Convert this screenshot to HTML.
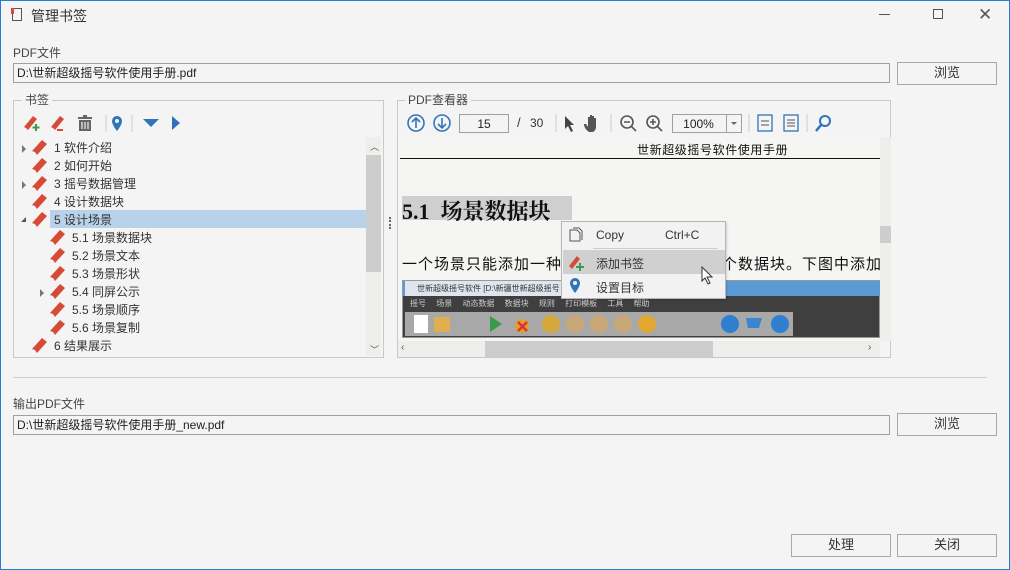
<!DOCTYPE html>
<html><head><meta charset="utf-8"><style>
*{margin:0;padding:0;box-sizing:border-box}
body{width:1010px;height:570px;background:#f4f4f4;font-family:"Liberation Sans","Microsoft YaHei","Noto Sans CJK SC",sans-serif;font-size:12px;color:#333;position:relative;overflow:hidden}
.a{position:absolute}
.win{position:absolute;left:0;top:0;width:1010px;height:570px;border:1px solid #2a7ad2}
.inp{position:absolute;background:#f4f4f4;border:1px solid #a0a0a0;padding:2px 3px;font-size:12px;line-height:14px;color:#222}
.btn{position:absolute;border:1px solid #a8a8a8;background:#f4f4f4;text-align:center;font-size:13px;line-height:20px;color:#333}
.grp{position:absolute;border:1px solid #c8c8c8}
.lg{position:absolute;background:#f4f4f4;padding:0 3px;font-size:12px;color:#444;line-height:13px}
.row{position:absolute;font-size:12px;line-height:16px;color:#333;white-space:nowrap}
.bm{position:absolute;width:16px;height:16px}
.arr{position:absolute;width:0;height:0;border-top:4px solid transparent;border-bottom:4px solid transparent;border-left:4px solid #777}
</style></head><body>
<div class="win"></div>
<div class="a" style="left:12px;top:8px;width:10px;height:13px;border:1px solid #555"></div>
<div class="a" style="left:11px;top:8px;width:3px;height:6px;background:#d64b35"></div>
<div class="a" style="left:31px;top:6px;font-size:14px;color:#333">管理书签</div>
<div class="a" style="left:879px;top:14px;width:11px;height:1px;background:#555"></div>
<div class="a" style="left:933px;top:9px;width:10px;height:10px;border:1px solid #555"></div>
<div class="a" style="left:978px;top:5px;font-size:17px;color:#555">✕</div>

<div class="a" style="left:13px;top:44px;color:#444">PDF文件</div>
<div class="inp" style="left:13px;top:63px;width:877px;height:20px">D:\世新超级摇号软件使用手册.pdf</div>
<div class="btn" style="left:897px;top:62px;width:100px;height:23px">浏览</div>

<div class="grp" style="left:13px;top:100px;width:371px;height:258px"></div>
<div class="lg" style="left:22px;top:94px">书签</div>
<svg class="a" style="left:22px;top:113px" width="170" height="20">
<g fill="#d64b35"><path d="M2 14 L11 3 L15 6 L6 17 L4 15 Z"/><path d="M29 14 L38 3 L42 6 L33 17 L31 15 Z"/></g>
<path d="M14 11v7M10.5 14.5h7" stroke="#3d9a4c" stroke-width="2"/>
<path d="M35 17h6" stroke="#d64b35" stroke-width="2"/>
<g fill="#666"><rect x="56" y="4" width="14" height="2"/><rect x="61" y="2" width="4" height="2"/><rect x="57" y="7" width="12" height="11"/></g>
<g stroke="#f4f4f4" stroke-width="1.2"><path d="M60 9v7M63 9v7M66 9v7"/></g>
<line x1="84" y1="2" x2="84" y2="19" stroke="#ccc"/>
<path d="M95 3a5 5 0 0 1 5 5c0 4-5 10-5 10s-5-6-5-10a5 5 0 0 1 5-5z" fill="#2f74b8"/><circle cx="95" cy="8" r="2" fill="#f4f4f4"/>
<line x1="110" y1="2" x2="110" y2="19" stroke="#ccc"/>
<path d="M121 6h16l-8 8z" fill="#2f74b8"/>
<path d="M150 3l8 7-8 7z" fill="#2f74b8"/>
</svg>
<div class="a" style="left:50px;top:210px;width:316px;height:18px;background:#b8d2ea"></div>
<div id="tree"></div>
<script>
var rows=[[0,1,"1 软件介绍"],[0,0,"2 如何开始"],[0,1,"3 摇号数据管理"],[0,0,"4 设计数据块"],[0,2,"5 设计场景"],[1,0,"5.1 场景数据块"],[1,0,"5.2 场景文本"],[1,0,"5.3 场景形状"],[1,1,"5.4 同屏公示"],[1,0,"5.5 场景顺序"],[1,0,"5.6 场景复制"],[0,0,"6 结果展示"]];
var h="";rows.forEach(function(r,i){var y=139+i*18,x=r[0]?50:32;
if(r[1]==1)h+='<div class="arr" style="left:'+(x-10)+'px;top:'+(y+6)+'px"></div>';
if(r[1]==2)h+='<div class="a" style="left:'+(x-11)+'px;top:'+(y+6)+'px;width:0;height:0;border-left:5px solid transparent;border-bottom:5px solid #555"></div>';
h+='<svg class="bm" style="left:'+x+'px;top:'+y+'px" viewBox="0 0 16 16"><path d="M0 12 L10 1 L15 5 L5 16 L3 13 Z" fill="#d64b35"/></svg>';
h+='<div class="row" style="left:'+(x+22)+'px;top:'+(y+1)+'px">'+r[2]+'</div>';});
document.getElementById("tree").innerHTML=h;
</script>
<div class="a" style="left:366px;top:137px;width:15px;height:219px;background:#eeeeea"></div>
<div class="a" style="left:366px;top:155px;width:15px;height:117px;background:#cdcdcd"></div>
<div class="a" style="left:370px;top:140px;font-size:9px;color:#555">︿</div>
<div class="a" style="left:370px;top:343px;font-size:9px;color:#555">﹀</div>
<div class="a" style="left:389px;top:217px;width:2px;height:12px;border-left:2px dotted #666"></div>

<div class="grp" style="left:397px;top:100px;width:494px;height:258px"></div>
<div class="lg" style="left:405px;top:94px">PDF查看器</div>
<svg class="a" style="left:405px;top:112px" width="430" height="22">
<g fill="none" stroke="#2f74b8" stroke-width="1.6"><circle cx="11" cy="11" r="8"/><path d="M11 16V6M7 10l4-4 4 4"/><circle cx="37" cy="11" r="8"/><path d="M37 6v10M33 12l4 4 4-4"/></g>
<line x1="151" y1="2" x2="151" y2="20" stroke="#ccc"/>
<path d="M160 4v13l3-3 3 6 2-1-3-6h4z" fill="#444"/>
<path d="M184 20c-3-2-5-5-5-8l2 0 2 3V5h2v6V3h2v8V4h2v7V6h2v9c0 3-2 5-4 5z" fill="#555"/>
<line x1="206" y1="2" x2="206" y2="20" stroke="#ccc"/>
<g fill="none" stroke="#555" stroke-width="1.6"><circle cx="222" cy="10" r="6"/><path d="M226 14l5 5M219 10h6"/><circle cx="248" cy="10" r="6"/><path d="M252 14l5 5M245 10h6M248 7v6"/></g>
<line x1="344" y1="2" x2="344" y2="20" stroke="#ccc"/>
<rect x="353" y="3" width="14" height="16" fill="none" stroke="#2f74b8" stroke-width="1.3"/><path d="M356 13h8M356 9h8" stroke="#555"/>
<rect x="379" y="3" width="14" height="16" fill="none" stroke="#2f74b8" stroke-width="1.3"/><path d="M382 8h8M382 11h8M382 14h8" stroke="#555"/>
<line x1="402" y1="2" x2="402" y2="20" stroke="#ccc"/>
<circle cx="420" cy="9" r="5" fill="none" stroke="#2f74b8" stroke-width="2"/><path d="M416 13l-5 6" stroke="#2f74b8" stroke-width="2.5"/>
</svg>
<div class="inp" style="left:459px;top:114px;width:50px;height:19px;text-align:center">15</div>
<div class="a" style="left:517px;top:115px;font-size:13px">/</div>
<div class="a" style="left:530px;top:116px;font-size:12px">30</div>
<div class="inp" style="left:672px;top:114px;width:70px;height:19px;text-align:center;padding-right:20px">100%</div>
<div class="a" style="left:726px;top:114px;width:16px;height:19px;border-left:1px solid #a0a0a0"></div>
<div class="a" style="left:731px;top:122px;border-left:3px solid transparent;border-right:3px solid transparent;border-top:3px solid #666"></div>

<div class="a" style="left:398px;top:137px;width:482px;height:204px;background:#f5f5f3"></div>
<div class="a" style="left:637px;top:141px;font-size:12px;color:#111;letter-spacing:0.6px">世新超级摇号软件使用手册</div>
<div class="a" style="left:400px;top:158px;width:480px;height:1px;background:#111"></div>
<div class="a" style="left:402px;top:196px;width:170px;height:24px;background:#cfcfcf"></div>
<div class="a" style="left:402px;top:195px;font-family:'Liberation Serif','Noto Serif CJK SC',serif;font-weight:bold;font-size:22px;color:#111;white-space:nowrap">5.1&nbsp; 场景数据块</div>
<div class="a" style="left:402px;top:253px;font-size:15px;color:#111;white-space:nowrap;letter-spacing:1px">一个场景只能添加一种数据块，但可以添加多个数据块。下图中添加</div>
<div class="a" style="left:402px;top:280px;width:478px;height:58px;background:#3f3f3f;border:1px solid #999"></div>
<div class="a" style="left:403px;top:281px;width:477px;height:15px;background:#5a9bd5"></div>
<div class="a" style="left:405px;top:281px;width:160px;height:15px;background:#dde6ee;font-size:8px;color:#333;line-height:15px;padding-left:12px">世新超级摇号软件 [D:\新疆世新超级摇号项</div>
<div class="a" style="left:410px;top:298px;font-size:8px;color:#ccc;word-spacing:8px">摇号 场景 动态数据 数据块 规则 打印模板 工具 帮助</div>
<div class="a" style="left:405px;top:312px;width:388px;height:24px;background:#a8a8a8"></div>
<svg class="a" style="left:410px;top:313px" width="385" height="22">
<rect x="4" y="2" width="14" height="18" fill="#fff"/><rect x="24" y="4" width="16" height="15" fill="#e0b050"/>
<path d="M80 3l12 8-12 8z" fill="#3a9a4c"/><circle cx="112" cy="13" r="7" fill="#e0a030"/><path d="M108 9l9 9M117 9l-9 9" stroke="#d33" stroke-width="2.5"/>
<g fill="#d4a83a"><circle cx="141" cy="11" r="9"/></g><g fill="#c8a878"><circle cx="165" cy="11" r="9"/><circle cx="189" cy="11" r="9"/><circle cx="213" cy="11" r="9"/></g><circle cx="237" cy="11" r="9" fill="#e0a830"/>
<circle cx="320" cy="11" r="9" fill="#2f7fd0"/><circle cx="370" cy="11" r="9" fill="#2f7fd0"/><path d="M336 5h16l-3 10h-11z" fill="#3a87d0"/>
</svg>
<div class="a" style="left:880px;top:137px;width:11px;height:204px;background:#eeeeea"></div>
<div class="a" style="left:880px;top:226px;width:11px;height:17px;background:#cdcdcd"></div>
<div class="a" style="left:398px;top:341px;width:482px;height:16px;background:#eeeeea"></div>
<div class="a" style="left:485px;top:341px;width:228px;height:16px;background:#cdcdcd"></div>
<div class="a" style="left:401px;top:342px;font-size:10px;color:#555">‹</div>
<div class="a" style="left:868px;top:342px;font-size:10px;color:#555">›</div>
<div class="a" style="left:561px;top:221px;width:165px;height:78px;background:#f2f2f2;border:1px solid #b5b5b5;box-shadow:1px 1px 2px rgba(0,0,0,.15)"></div>
<svg class="a" style="left:568px;top:227px" width="16" height="18"><path d="M2 3h7l3 3v8H2z" fill="none" stroke="#555"/><path d="M5 1h6l3 3v9" fill="none" stroke="#555"/></svg>
<div class="a" style="left:596px;top:228px;font-size:12px;color:#333">Copy</div>
<div class="a" style="left:665px;top:228px;font-size:12px;color:#333">Ctrl+C</div>
<div class="a" style="left:593px;top:248px;width:125px;height:1px;background:#ccc"></div>
<div class="a" style="left:563px;top:250px;width:162px;height:24px;background:#d0d0d0"></div>
<svg class="a" style="left:567px;top:253px" width="20" height="20"><path d="M2 13L10 3l3 3-8 10z" fill="#d64b35"/><path d="M13 10v8M9 14h8" stroke="#3d9a4c" stroke-width="2"/></svg>
<div class="a" style="left:596px;top:255px;font-size:12px;color:#333">添加书签</div>
<svg class="a" style="left:568px;top:277px" width="14" height="18"><path d="M7 1a5 5 0 0 1 5 5c0 4-5 10-5 10S2 10 2 6a5 5 0 0 1 5-5z" fill="#2f74b8"/><circle cx="7" cy="6" r="2" fill="#f2f2f2"/></svg>
<div class="a" style="left:596px;top:279px;font-size:12px;color:#333">设置目标</div>
<svg class="a" style="left:701px;top:266px" width="14" height="20"><path d="M1 1v14l3-3 3 6 2-1-3-6h5z" fill="#fff" stroke="#333"/></svg>

<div class="a" style="left:13px;top:377px;width:974px;height:1px;background:#d0d0d0"></div>
<div class="a" style="left:13px;top:395px;color:#444">输出PDF文件</div>
<div class="inp" style="left:13px;top:415px;width:877px;height:20px">D:\世新超级摇号软件使用手册_new.pdf</div>
<div class="btn" style="left:897px;top:413px;width:100px;height:23px">浏览</div>
<div class="btn" style="left:791px;top:534px;width:100px;height:23px">处理</div>
<div class="btn" style="left:897px;top:534px;width:100px;height:23px">关闭</div>
</body></html>
